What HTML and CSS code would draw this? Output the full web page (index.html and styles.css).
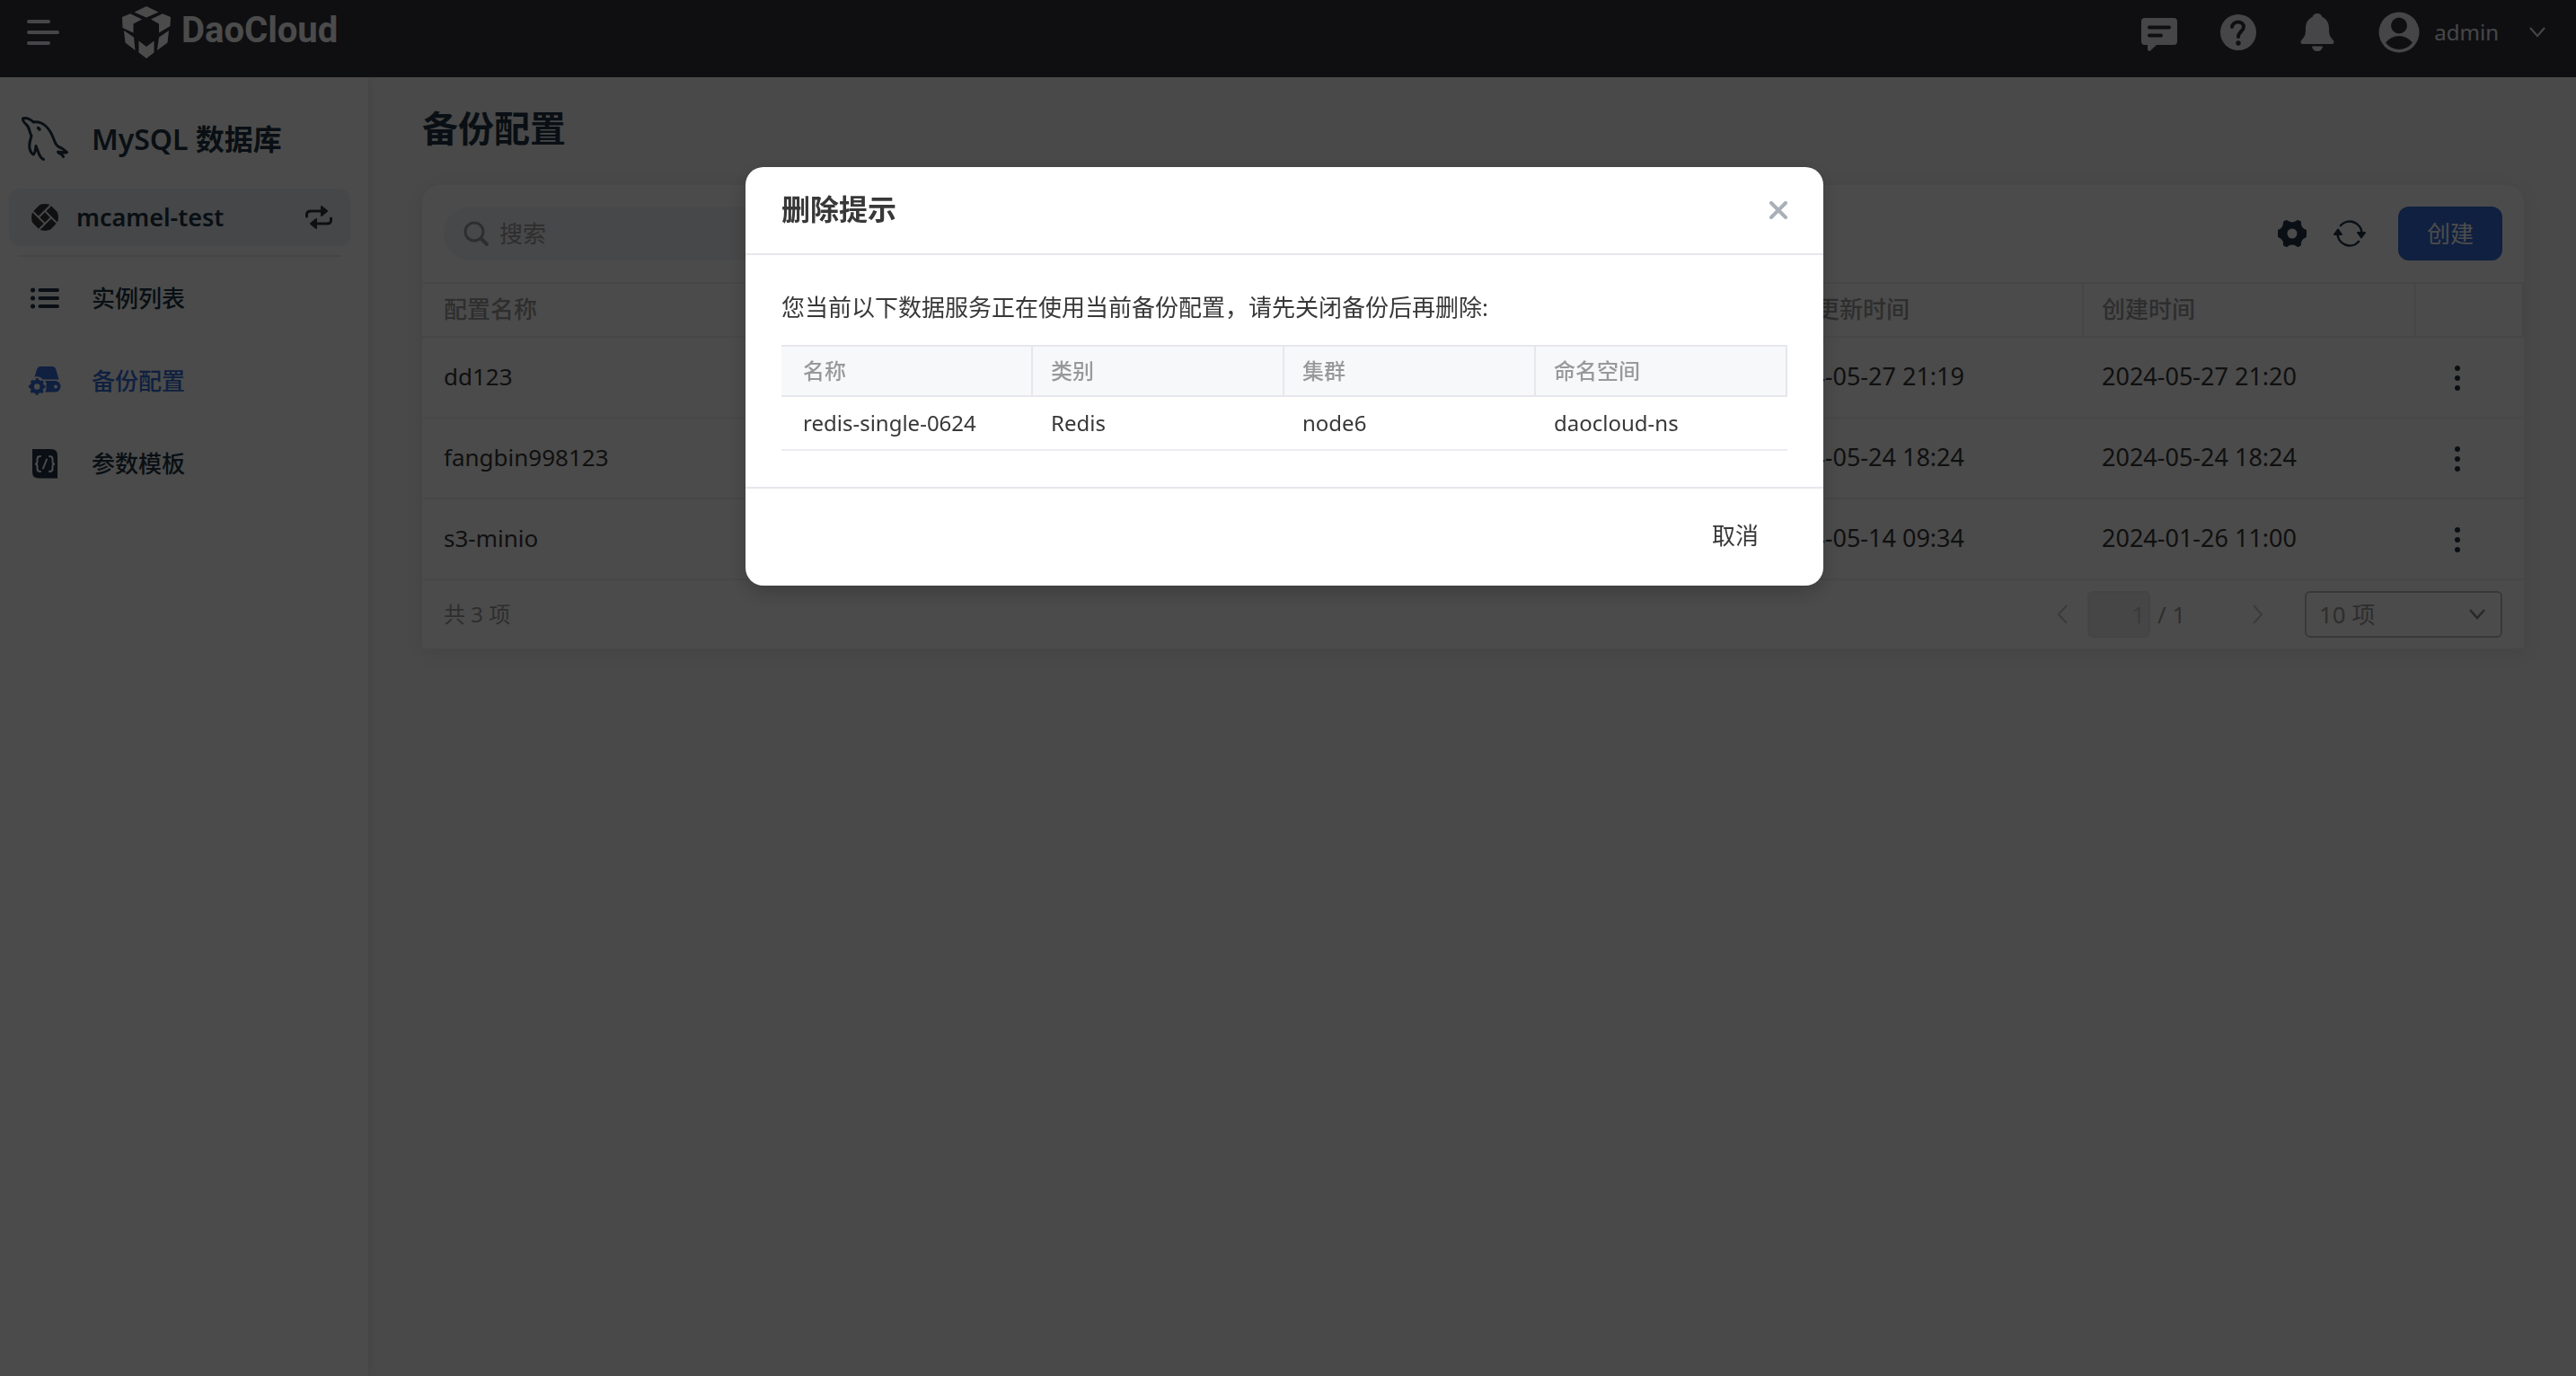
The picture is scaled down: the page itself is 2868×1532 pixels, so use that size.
FILE: index.html
```html
<!DOCTYPE html>
<html lang="zh-CN">
<head>
<meta charset="utf-8">
<meta name="viewport" content="width=device-width, initial-scale=1">
<title>备份配置 - DaoCloud</title>
<link rel="stylesheet" href="styles.css">
</head>
<body>
<header class="topbar">
  <button class="icon-btn menu-btn" type="button" aria-label="菜单">
    <svg width="36" height="28" viewBox="0 0 36 28" fill="none" stroke="currentColor" stroke-width="4" stroke-linecap="round"><path d="M2 2H24M2 14H34M2 26H24"/></svg>
  </button>
  <a class="brand" href="#">
    <svg width="54" height="58" viewBox="0 0 54 58" fill="currentColor" aria-hidden="true">
      <path d="M27 0 40.500 6.500 27 12.500 13.500 6.500Z"/>
      <path d="M9 8.200 22 14.500 12.500 19.500V29.500L0.500 24 0 12Z"/>
      <path d="M45 8.200 32 14.500 41 19.500V29.500L53.500 22 54 12Z"/>
      <path d="M2 27 13 34.500 14.500 49 3.500 40.500Z"/>
      <path d="M52 27 41 34.500 39 49 50.500 40.500Z"/>
      <path d="M18.500 38.500 27 45 35.500 38.500V51.500L27 58 18.500 51.500Z"/>
    </svg>
    <span class="brand-name">DaoCloud</span>
  </a>
  <div class="topbar-actions">
    <button class="icon-btn" type="button" aria-label="消息">
      <svg width="40" height="42" viewBox="0 0 40 42"><path fill="currentColor" d="M4 5H36Q40 5 40 9V31Q40 35 36 35H17L10 41.500Q7 43 7 39V35H4Q0 35 0 31V9Q0 5 4 5Z"/><path d="M9 15.500H31M9 24.500H22" fill="none" stroke="#32353c" stroke-width="4" stroke-linecap="round"/></svg>
    </button>
    <button class="icon-btn" type="button" aria-label="帮助">
      <svg width="40" height="40" viewBox="0 0 40 40"><circle cx="20" cy="20" r="20" fill="currentColor"/><path d="M13 14C14 6.500 26 6.500 26 14 26 19 20 19 20 25" fill="none" stroke="#32353c" stroke-width="4" stroke-linecap="round"/><circle cx="20" cy="32" r="2.700" fill="#32353c"/></svg>
    </button>
    <button class="icon-btn" type="button" aria-label="通知">
      <svg width="40" height="42" viewBox="0 0 40 42" fill="currentColor"><path d="M20 0C23 0 25 2 25.500 4 31 6.500 33 11 33 17 33 25 34.500 26 37.500 29.500 39.500 32 38 34 36 34H4C2 34 0.500 32 2.500 29.500 5.500 26 7 25 7 17 7 11 9 6.500 14.500 4 15 2 17 0 20 0Z"/><path d="M14 36.500H26Q25 42 20 42T14 36.500Z"/></svg>
    </button>
    <button class="icon-btn user-btn" type="button">
      <svg width="46" height="46" viewBox="0 0 46 46"><circle cx="23" cy="23" r="22.500" fill="currentColor"/><circle cx="23" cy="15.500" r="9" fill="#32353c"/><path d="M8 34.500Q14 27 23 27T38 34.500Q32 42 23 42T8 34.500Z" fill="#32353c"/></svg>
      <span>admin</span>
      <svg class="caret" width="18" height="12" viewBox="0 0 18 12" fill="none" stroke="currentColor" stroke-width="2"><path d="M1 1 9 10 17 1"/></svg>
    </button>
  </div>
</header>

<div class="layout">
  <aside class="sidebar">
    <div class="product">
      <svg width="52" height="50" viewBox="0 0 52 50" fill="none" stroke="currentColor" stroke-width="3" stroke-linecap="round" stroke-linejoin="round" aria-hidden="true"><path d="M24.500 47.500C21 46 19.500 42 18.500 39L16 32.500C15.500 36 15.500 40 13 42 9 39.500 7.500 33 10 25L11 21C8.500 18 9.500 12 5.500 9 3 6.500 1 4 1.500 2 5 .500 10 3 13.500 6 25 4.500 32 15 35.500 24 38 30 38 32 41.500 33.500 46 35 48 37 50.500 39.500 47 41 44 39 40.500 39 42 42 45.500 41 46.500 44.500"/><path d="M18.500 12.500 20 14" stroke-width="3.500"/></svg>
      <span>MySQL 数据库</span>
    </div>
    <button class="workspace" type="button">
      <svg width="30" height="30" viewBox="-15 -15 30 30" fill="currentColor" aria-hidden="true"><clipPath id="disc"><circle r="15"/></clipPath><g clip-path="url(#disc)"><path transform="scale(-1 1) rotate(45)" d="M-4-4H4V4H-4ZM-14-14H4V-6H-14ZM6-14H14V4H6ZM-4 6H14V14H-4ZM-14-4H-6V14H-14Z"/></g></svg>
      <span class="workspace-name">mcamel-test</span>
      <svg width="30" height="26" viewBox="0 0 30 26" aria-hidden="true"><path d="M1.500 12V10Q1.500 6 6 6H19M28.500 14V16Q28.500 20 24 20H11" fill="none" stroke="currentColor" stroke-width="3" stroke-linecap="round"/><path fill="currentColor" d="M17 0.500Q18-.500 19.500 1L24.500 5Q25.500 6 24.500 7L19.500 11Q18 12.500 17 11.500ZM13 14.500Q12 13.500 10.500 15L5.500 19Q4.500 20 5.500 21L10.500 25Q12 26.500 13 25.500Z"/></svg>
    </button>
    <nav class="nav">
      <a href="#"><svg width="36" height="34" viewBox="0 0 36 34" fill="none" stroke="currentColor" stroke-width="4" stroke-linecap="round"><path d="M12.500 8H32M12.500 17H32M12.500 26H32"/><path stroke-width="5" d="M4.500 8h.1M4.500 17h.1M4.500 26h.1"/></svg>实例列表</a>
      <a href="#" class="active" aria-current="page"><svg width="36" height="34" viewBox="0 0 36 34"><g fill="currentColor"><path d="M13 1H26Q29.500 1 30.500 5L33.500 15.500H16Q12 11 6.500 12.500L9 4.500Q10 1 13 1Z"/><path d="M18 17H30A6.300 6.300 0 0 1 30 29.500H18L19.500 27V19.500Z"/></g><circle cx="30" cy="23.500" r="2" fill="#fff"/><circle cx="9.200" cy="23.500" r="5.500" fill="none" stroke="currentColor" stroke-width="4.500"/><circle cx="9.200" cy="23.500" r="8" fill="none" stroke="currentColor" stroke-width="2.500" stroke-dasharray="3.140 3.140" transform="rotate(-11 9.200 23.500)"/></svg>备份配置</a>
      <a href="#"><svg width="36" height="34" viewBox="0 0 36 34"><path fill="currentColor" d="M4 1H25Q32 1 32 8V33.500H11Q4 33.500 4 27Z"/><path d="M13 9Q9.500 9 9.500 12V15Q9.500 17.500 7 17.500 9.500 17.500 9.500 20V23Q9.500 26 13 26M23 9Q26.500 9 26.500 12V15Q26.500 17.500 29 17.500 26.500 17.500 26.500 20V23Q26.500 26 23 26M20 12.500 16 22.500" fill="none" stroke="#fff" stroke-width="2" stroke-linecap="round"/></svg>参数模板</a>
    </nav>
  </aside>

  <main class="main">
    <h1>备份配置</h1>
    <section class="card">
      <div class="toolbar">
        <label class="search">
          <svg width="28" height="28" viewBox="0 0 28 28" fill="none" stroke="currentColor" stroke-width="3" stroke-linecap="round" aria-hidden="true"><circle cx="12" cy="12" r="10"/><path d="M19.500 19.500 26 26" stroke-width="4"/></svg>
          <input type="search" placeholder="搜索" aria-label="搜索">
        </label>
        <div class="tools">
          <button class="icon-btn" type="button" aria-label="设置">
            <svg width="36" height="36" viewBox="-18 -18 36 36"><path fill="currentColor" stroke="currentColor" stroke-width="3" stroke-linejoin="round" fill-rule="evenodd" d="M-6.500-13.500Q0-8.500 6.500-13.500L8.500-12.500Q8-5.500 14.500-3V3Q8 5.500 8.500 12.500L6.500 13.500Q0 8.500-6.500 13.500L-8.500 12.500Q-8 5.500-14.500 3V-3Q-8-5.500-8.500-12.500Z"/><circle r="5.500" fill="#fafafa"/></svg>
          </button>
          <button class="icon-btn" type="button" aria-label="刷新">
            <svg width="36" height="36" viewBox="0 0 36 36"><path d="M8 9A13.500 13.500 0 0 1 31.500 18M28 27A13.500 13.500 0 0 1 4.500 18" fill="none" stroke="currentColor" stroke-width="2.600" stroke-linecap="round"/><path fill="currentColor" stroke="currentColor" stroke-width="2" stroke-linejoin="round" d="M27 17H35L31 22.500ZM1 19H9L5 13.500Z"/></svg>
          </button>
          <button class="primary" type="button">创建</button>
        </div>
      </div>
      <table class="grid">
        <colgroup><col span="6"><col class="col-action"></colgroup>
        <thead>
          <tr><th scope="col">配置名称</th><th></th><th></th><th></th><th scope="col">最近更新时间</th><th scope="col">创建时间</th><th></th></tr>
        </thead>
        <tbody>
          <tr><td>dd123</td><td></td><td></td><td></td><td class="time">2024-05-27 21:19</td><td class="time">2024-05-27 21:20</td><td><button class="icon-btn more" type="button" aria-label="更多"><svg width="6" height="28" viewBox="0 0 6 28" fill="currentColor"><circle cx="3" cy="3" r="3"/><circle cx="3" cy="14" r="3"/><circle cx="3" cy="25" r="3"/></svg></button></td></tr>
          <tr><td>fangbin998123</td><td></td><td></td><td></td><td class="time">2024-05-24 18:24</td><td class="time">2024-05-24 18:24</td><td><button class="icon-btn more" type="button" aria-label="更多"><svg width="6" height="28" viewBox="0 0 6 28" fill="currentColor"><circle cx="3" cy="3" r="3"/><circle cx="3" cy="14" r="3"/><circle cx="3" cy="25" r="3"/></svg></button></td></tr>
          <tr><td>s3-minio</td><td></td><td></td><td></td><td class="time">2024-05-14 09:34</td><td class="time">2024-01-26 11:00</td><td><button class="icon-btn more" type="button" aria-label="更多"><svg width="6" height="28" viewBox="0 0 6 28" fill="currentColor"><circle cx="3" cy="3" r="3"/><circle cx="3" cy="14" r="3"/><circle cx="3" cy="25" r="3"/></svg></button></td></tr>
        </tbody>
      </table>
      <div class="pager">
        <span class="total">共 3 项</span>
        <button class="icon-btn step" type="button" aria-label="上一页" disabled><svg width="12" height="22" viewBox="0 0 12 22" fill="none" stroke="currentColor" stroke-width="2"><path d="M11 1 2 11 11 21"/></svg></button>
        <input class="page" type="text" value="1" aria-label="页码" disabled>
        <span class="pages">/ 1</span>
        <button class="icon-btn step" type="button" aria-label="下一页" disabled><svg width="12" height="22" viewBox="0 0 12 22" fill="none" stroke="currentColor" stroke-width="2"><path d="M1 1 10 11 1 21"/></svg></button>
        <div class="page-size">
          <select aria-label="每页条数"><option>10 项</option></select>
          <svg width="18" height="12" viewBox="0 0 18 12" fill="none" stroke="currentColor" stroke-width="2.500" aria-hidden="true"><path d="M1 1 9 10 17 1"/></svg>
        </div>
      </div>
    </section>
  </main>
</div>

<div class="overlay">
  <section class="modal" role="dialog" aria-modal="true" aria-labelledby="modal-title">
    <header class="modal-head">
      <h2 id="modal-title">删除提示</h2>
      <button class="icon-btn close" type="button" aria-label="关闭"><svg width="20" height="20" viewBox="0 0 20 20" fill="none" stroke="currentColor" stroke-width="4" stroke-linecap="round"><path d="M2 2 18 18M18 2 2 18"/></svg></button>
    </header>
    <div class="modal-body">
      <p>您当前以下数据服务正在使用当前备份配置，请先关闭备份后再删除:</p>
      <table class="usage">
        <thead><tr><th scope="col">名称</th><th scope="col">类别</th><th scope="col">集群</th><th scope="col">命名空间</th></tr></thead>
        <tbody><tr><td>redis-single-0624</td><td>Redis</td><td>node6</td><td>daocloud-ns</td></tr></tbody>
      </table>
    </div>
    <footer class="modal-foot"><button class="cancel" type="button">取消</button></footer>
  </section>
</div>
</body>
</html>
```
FILE: styles.css
```css
* { box-sizing: border-box; }

body {
  margin: 0;
  min-height: 100vh;
  display: flex;
  flex-direction: column;
  background: #f3f3f4;
  color: #383838;
  font: 26px/40px "Noto Sans", "Noto Sans CJK SC", sans-serif;
}

h1, h2, p { margin: 0; }
svg { display: block; flex: none; }
button, input, select { font: inherit; color: inherit; }
a { color: inherit; text-decoration: none; }

.icon-btn {
  display: flex;
  align-items: center;
  justify-content: center;
  padding: 0;
  border: 0;
  background: none;
}

/* top bar */
.topbar {
  display: flex;
  align-items: center;
  height: 86px;
  padding: 0 34px 14px 30px;
  background: #32353c;
  color: #e9ecf0;
}
.brand {
  display: flex;
  align-items: center;
  gap: 12px;
  margin-left: 70px;
  color: #fafafa;
}
.brand-name {
  padding-bottom: 4px;
  font: bold 40px/52px Roboto, sans-serif;
}
.topbar-actions {
  display: flex;
  align-items: center;
  gap: 48px;
  margin-left: auto;
}
.user-btn { font-size: 24px; }
.user-btn span { margin: 0 34px 0 16px; }

/* page frame */
.layout { flex: 1; display: flex; }
.sidebar {
  flex: none;
  width: 410px;
  background: #fafafa;
  box-shadow: 2px 0 8px rgba(0, 0, 0, .06);
  color: #213543;
  font-weight: 600;
}
.product {
  display: flex;
  align-items: center;
  gap: 26px;
  height: 124px;
  padding: 14px 24px 0;
  font-size: 32px;
}
.workspace {
  display: flex;
  align-items: center;
  width: calc(100% - 30px);
  height: 64px;
  margin: 0 20px 0 10px;
  padding: 0 20px 0 25px;
  border: 0;
  border-radius: 12px;
  background: #ebeef3;
  font-size: 27px;
}
.workspace svg { color: #383838; }
.workspace-name { flex: 1; margin-left: 20px; text-align: left; }
.nav {
  margin: 10px 30px 0 20px;
  border-top: 2px solid #e9e9eb;
}
.nav a {
  display: flex;
  align-items: center;
  gap: 34px;
  height: 92px;
  padding-left: 12px;
  font-weight: 500;
}
.nav .active { color: #356bd5; }

.main { flex: 1; min-width: 0; padding: 32px 58px 60px 60px; }
h1 {
  margin-bottom: 38px;
  color: #213543;
  font-size: 40px;
  font-weight: 600;
  line-height: 50px;
}

/* list card */
.card {
  border-radius: 20px 20px 0 0;
  background: #fcfcfc;
  box-shadow: 0 4px 20px rgba(0, 0, 0, .08);
}
.toolbar {
  display: flex;
  justify-content: space-between;
  padding: 24px;
}
.search {
  display: flex;
  align-items: center;
  gap: 12px;
  width: 600px;
  height: 60px;
  padding: 0 22px;
  border-radius: 30px;
  background: #eff1f4;
  color: #999;
}
.search input {
  flex: 1;
  min-width: 0;
  padding: 0;
  border: 0;
  outline: 0;
  background: none;
}
.search input::placeholder { color: #999; opacity: 1; }
.tools {
  display: flex;
  align-items: center;
  gap: 28px;
  color: #213543;
}
.primary {
  width: 116px;
  height: 60px;
  margin-left: 8px;
  padding: 0;
  border: 0;
  border-radius: 12px;
  background: #356bd5;
  color: #fff;
}

table {
  width: 100%;
  table-layout: fixed;
  border-collapse: separate;
  border-spacing: 0;
}
th, td { text-align: left; white-space: nowrap; }
th { color: #999; font-weight: 500; }

.col-action { width: 120px; }
.grid th {
  height: 62px;
  padding: 0 20px 2px;
  border: solid #ececee;
  border-width: 2px 2px 2px 0;
}
.grid td {
  height: 90px;
  padding: 0 20px 2px;
  border-bottom: 2px solid #eeeef0;
}
.grid th:first-child, .grid td:first-child { padding-left: 24px; }
.grid .time { font-size: 27px; }
.more { width: 52px; padding-top: 4px; color: #213543; }

.pager {
  display: flex;
  align-items: center;
  height: 76px;
  padding: 0 24px;
  color: #999;
}
.total { margin-right: auto; font-size: 24px; }
.step { width: 32px; color: #c4c4c4; }
.page {
  width: 70px;
  height: 52px;
  margin: 0 8px 0 12px;
  padding: 0 4px;
  border: 2px solid #e4e4e4;
  border-radius: 6px;
  background: #ebebeb;
  color: #c4c4c4;
  text-align: right;
}
.pages { width: 96px; }
.page-size {
  display: grid;
  align-items: center;
  width: 220px;
  height: 52px;
  margin-left: 36px;
}
.page-size select, .page-size svg { grid-area: 1 / 1; }
.page-size select {
  width: 100%;
  height: 52px;
  padding: 0 14px;
  border: 2px solid #bbb;
  border-radius: 6px;
  background: none;
  appearance: none;
}
.page-size svg { justify-self: end; margin-right: 19px; color: #888; pointer-events: none; }

/* dialog */
.overlay {
  position: fixed;
  inset: 0;
  display: flex;
  align-items: flex-start;
  justify-content: center;
  padding: 186px 8px 0 0;
  background: rgba(0, 0, 0, .7);
}
.modal {
  width: 1200px;
  max-width: 100%;
  border-radius: 20px;
  background: #fff;
  box-shadow: 0 8px 24px rgba(0, 0, 0, .2);
}
.modal-head {
  display: flex;
  align-items: center;
  justify-content: space-between;
  height: 98px;
  padding: 0 40px;
  border-bottom: 2px solid #e6e6ec;
}
h2 { padding-bottom: 2px; font-size: 32px; font-weight: 600; }
.close { color: #a9b0b7; }
.modal-body { padding: 38px 40px 40px; }
.modal-body p { margin-bottom: 22px; }
.usage { font-size: 24px; }
.usage th {
  height: 58px;
  padding: 0 20px;
  border: solid #e6e6ec;
  border-width: 2px 2px 2px 0;
  background: #f7f8fa;
}
.usage td {
  height: 60px;
  padding: 0 20px;
  border-bottom: 2px solid #ececf1;
}
.usage th:first-child, .usage td:first-child { padding-left: 24px; }
.modal-foot {
  display: flex;
  justify-content: flex-end;
  padding: 22px 40px 26px;
  border-top: 2px solid #e6e6ec;
}
.cancel {
  height: 60px;
  padding: 0 32px;
  border: 0;
  border-radius: 12px;
  background: none;
}
```
